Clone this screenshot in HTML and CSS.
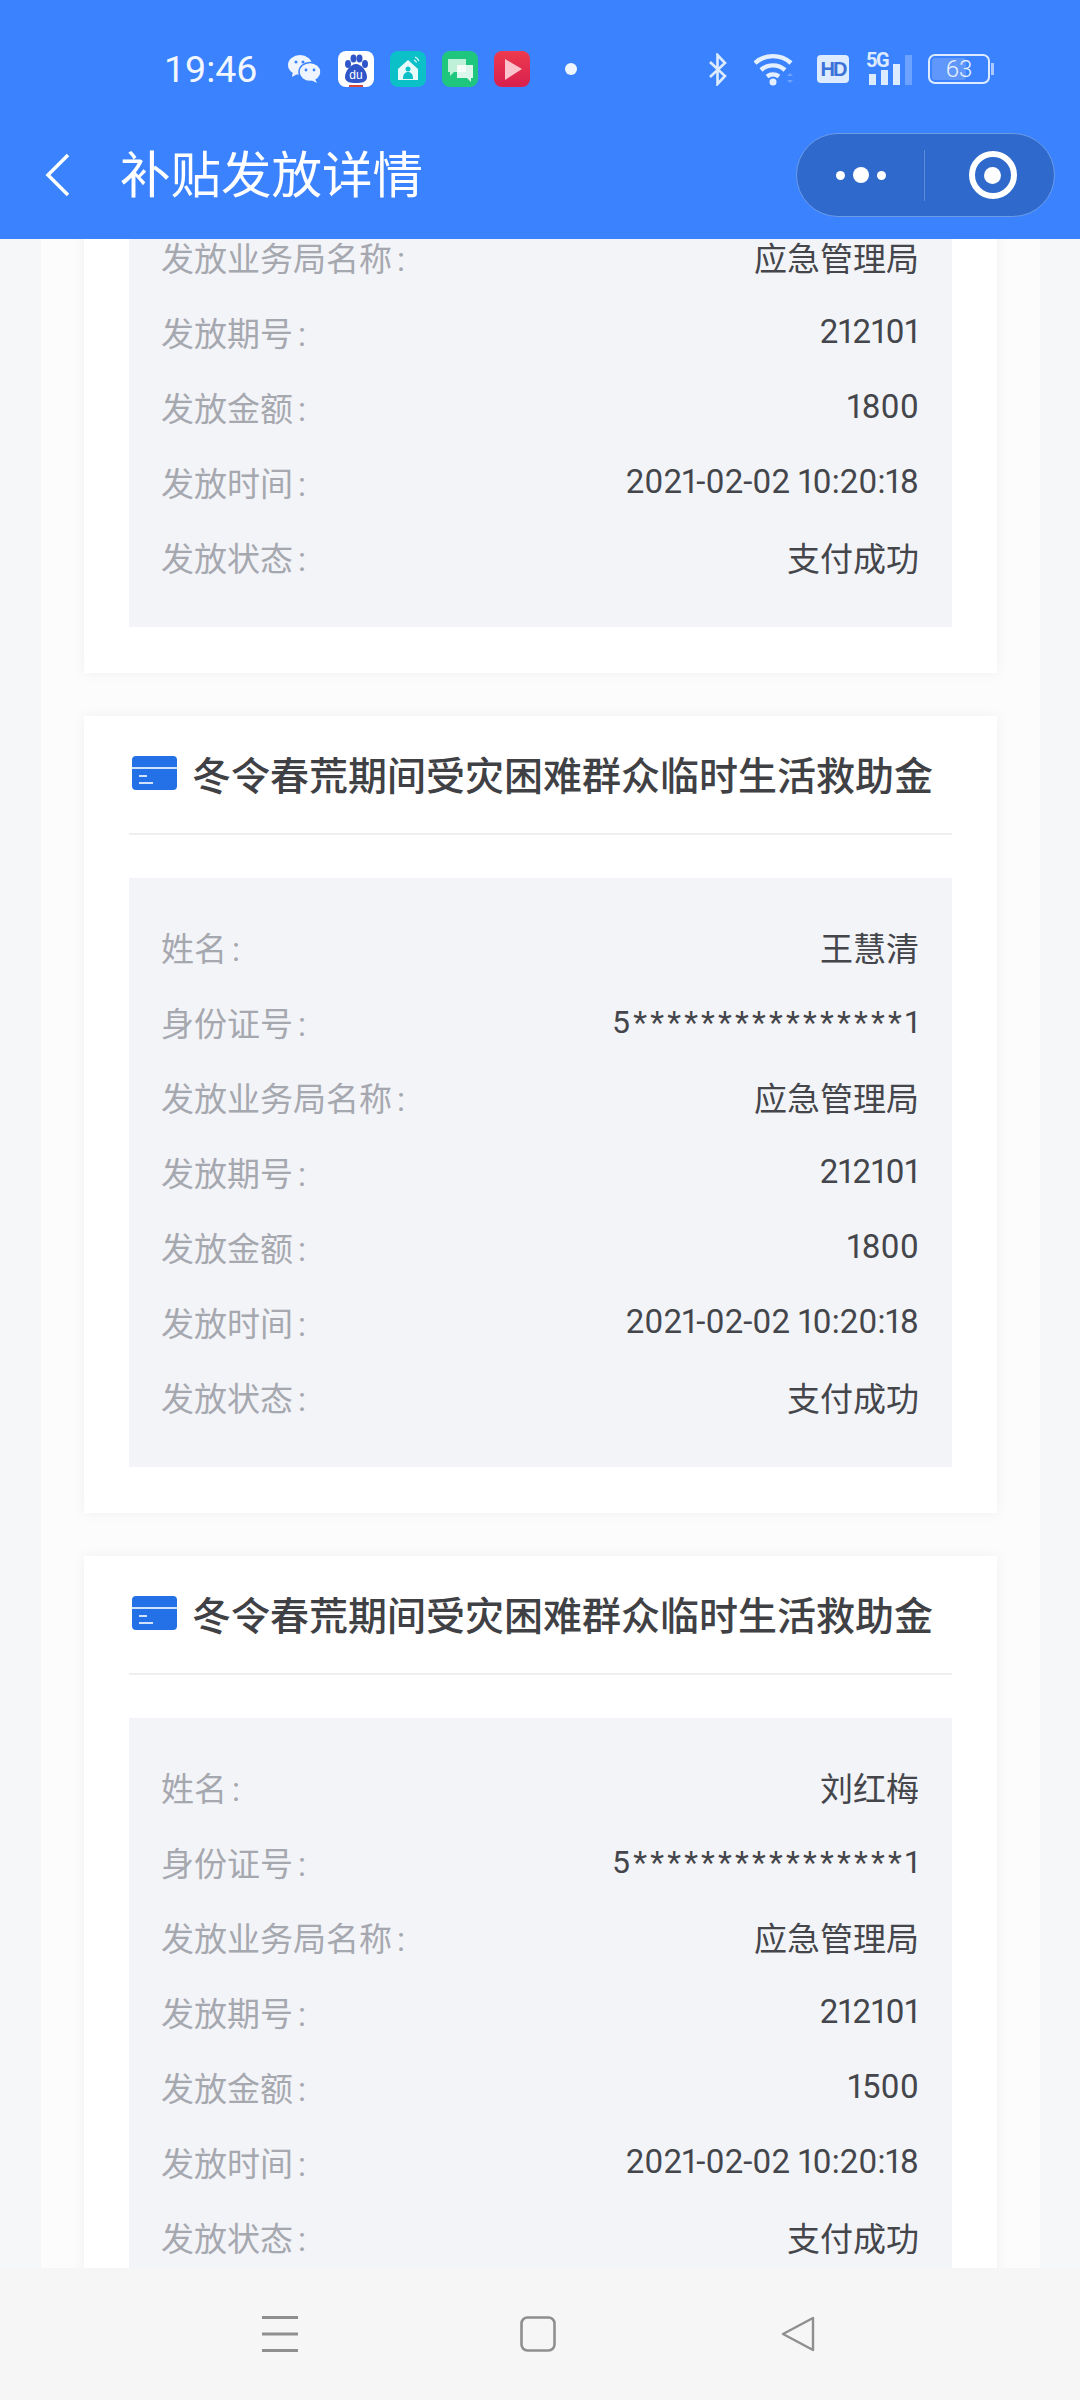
FILE: index.html
```html
<!DOCTYPE html>
<html lang="zh-CN">
<head>
    <meta charset="UTF-8">
    <meta name="viewport" content="width=device-width, initial-scale=1.0">
    <title>补贴发放详情</title>
    <link rel="stylesheet" href="styles.css">
</head>
<body>
    <div class="page">
        <header class="header">
            <div class="status">
                <span class="time">19:46</span>
                <svg class="ic-wechat" viewBox="0 0 33 28"><ellipse cx="12" cy="10" rx="12" ry="10" fill="#eef5ff"/><path d="M5 16l-1 6 7-4z" fill="#eef5ff"/><ellipse cx="22" cy="17" rx="11" ry="9.5" fill="#eef5ff" stroke="#3b82ff" stroke-width="1.5"/><path d="M27 24l2 4-6-3z" fill="#eef5ff"/><circle cx="8" cy="7" r="1.5" fill="#3b82ff"/><circle cx="15" cy="7" r="1.5" fill="#3b82ff"/><circle cx="18" cy="15" r="1.4" fill="#3b82ff"/><circle cx="26" cy="15" r="1.4" fill="#3b82ff"/></svg>
                <svg class="ic-app" viewBox="0 0 36 36"><rect width="36" height="36" rx="8" fill="#fff"/><ellipse cx="10" cy="13" rx="3" ry="4" fill="#2f55c8"/><ellipse cx="15.500" cy="7.500" rx="3" ry="4" fill="#2f55c8"/><ellipse cx="21.500" cy="7.500" rx="3" ry="4" fill="#2f55c8"/><ellipse cx="27" cy="13" rx="3" ry="4" fill="#2f55c8"/><path d="M18 13c5 0 11 7 11 13 0 5-5 6-11 6s-11-1-11-6c0-6 6-13 11-13z" fill="#2f55c8"/><text x="18" y="28" text-anchor="middle" class="du">du</text><rect x="11" y="34" width="14" height="2" fill="#d9453c"/></svg>
                <svg class="ic-app" viewBox="0 0 36 36"><rect width="36" height="36" rx="8" fill="#0cc0c8"/><path d="M8 18L18 9l10 9v11H8z" fill="#e8fbfb"/><circle cx="18" cy="18" r="2.500" fill="#0cc0c8"/><path d="M13 28c0-5 2-7 5-7s5 2 5 7z" fill="#0cc0c8"/><path d="M25 6c2 1 3 2 4 4M24 9c1 .5 2 1 2.500 2.500" fill="none" stroke="#e8fbfb" stroke-width="1.200"/></svg>
                <svg class="ic-app" viewBox="0 0 36 36"><rect width="36" height="36" rx="8" fill="#1fc77e"/><path d="M6 8h18v13H12l-4 4v-4H6z" fill="#bff0d8"/><path d="M15 14h16v13h-2v4l-4-4H15z" fill="#fff" opacity=".85"/></svg>
                <svg class="ic-app" viewBox="0 0 36 36"><defs><linearGradient id="redBg" x1="0" y1="0" x2="0" y2="1"><stop offset="0" stop-color="#ee3a4e"/><stop offset="1" stop-color="#d81f4e"/></linearGradient></defs><rect width="36" height="36" rx="8" fill="url(#redBg)"/><path d="M11 8l17 10-17 11z" fill="#fbc3cb"/></svg>
                <span class="dot"></span>

                <div class="status-right">
                    <svg class="ic-bt" viewBox="0 0 20 33"><path d="M2 9l15 14-7.500 8V2L17 10 2 24" fill="none" stroke="#dcebff" stroke-width="2.600"/></svg>
                    <svg class="ic-wifi" viewBox="0 0 41 34"><path d="M1 11a27 27 0 0 1 36 0M7 18a18 18 0 0 1 24 0M13 24.500a10 10 0 0 1 12 0" fill="none" stroke="#e4efff" stroke-width="4.400"/><circle cx="19" cy="30" r="3.500" fill="#e4efff"/><path d="M33 24l3-3 3 3zM33 28l3 3 3-3z" fill="#6ea2ff"/></svg>
                    <span class="hd">HD</span>
                    <div class="signal">
                        <span class="five-g">5G</span>
                        <span class="bar bar1"></span>
                        <span class="bar bar2"></span>
                        <span class="bar bar3"></span>
                        <span class="bar bar4"></span>
                    </div>
                    <div class="battery">
                        <span class="battery-level"></span>
                        <span class="battery-num">63</span>
                    </div>
                </div>
            </div>
            <div class="titlebar">
                <svg class="back" viewBox="0 0 25 44"><path d="M23 2L3 22l20 20" fill="none" stroke="#fff" stroke-width="3.500"/></svg>
                <h1>补贴发放详情</h1>
                <div class="capsule">
                    <div class="capsule-more">
                        <span class="cdot"></span>
                        <span class="cdot cdot-big"></span>
                        <span class="cdot"></span>
                    </div>
                    <div class="capsule-close"><span class="target"></span></div>
                </div>
            </div>
        </header>

        <main class="content">
            <div class="column">
                <section class="card card-cut">
                    <div class="panel">
                        <div class="row"><span class="label">发放业务局名称<span class="colon">:</span></span><span class="value">应急管理局</span></div>
                        <div class="row"><span class="label">发放期号<span class="colon">:</span></span><span class="value">212101</span></div>
                        <div class="row"><span class="label">发放金额<span class="colon">:</span></span><span class="value">1800</span></div>
                        <div class="row"><span class="label">发放时间<span class="colon">:</span></span><span class="value">2021-02-02 10:20:18</span></div>
                        <div class="row"><span class="label">发放状态<span class="colon">:</span></span><span class="value">支付成功</span></div>
                    </div>
                </section>

                <section class="card">
                    <div class="card-title">
                        <svg class="ic-card" viewBox="0 0 45 34"><rect width="45" height="34" rx="4" fill="#2470e6"/><rect y="11" width="45" height="2" fill="#cfe2ff"/><rect x="7" y="19" width="8" height="2" fill="#cfe2ff"/><rect x="7" y="26" width="14" height="2" fill="#cfe2ff"/></svg>
                        <h2>冬令春荒期间受灾困难群众临时生活救助金</h2>
                    </div>
                    <div class="panel">
                        <div class="row"><span class="label">姓名<span class="colon">:</span></span><span class="value">王慧清</span></div>
                        <div class="row"><span class="label">身份证号<span class="colon">:</span></span><span class="value value-id">5****************1</span></div>
                        <div class="row"><span class="label">发放业务局名称<span class="colon">:</span></span><span class="value">应急管理局</span></div>
                        <div class="row"><span class="label">发放期号<span class="colon">:</span></span><span class="value">212101</span></div>
                        <div class="row"><span class="label">发放金额<span class="colon">:</span></span><span class="value">1800</span></div>
                        <div class="row"><span class="label">发放时间<span class="colon">:</span></span><span class="value">2021-02-02 10:20:18</span></div>
                        <div class="row"><span class="label">发放状态<span class="colon">:</span></span><span class="value">支付成功</span></div>
                    </div>
                </section>

                <section class="card">
                    <div class="card-title">
                        <svg class="ic-card" viewBox="0 0 45 34"><rect width="45" height="34" rx="4" fill="#2470e6"/><rect y="11" width="45" height="2" fill="#cfe2ff"/><rect x="7" y="19" width="8" height="2" fill="#cfe2ff"/><rect x="7" y="26" width="14" height="2" fill="#cfe2ff"/></svg>
                        <h2>冬令春荒期间受灾困难群众临时生活救助金</h2>
                    </div>
                    <div class="panel">
                        <div class="row"><span class="label">姓名<span class="colon">:</span></span><span class="value">刘红梅</span></div>
                        <div class="row"><span class="label">身份证号<span class="colon">:</span></span><span class="value value-id">5****************1</span></div>
                        <div class="row"><span class="label">发放业务局名称<span class="colon">:</span></span><span class="value">应急管理局</span></div>
                        <div class="row"><span class="label">发放期号<span class="colon">:</span></span><span class="value">212101</span></div>
                        <div class="row"><span class="label">发放金额<span class="colon">:</span></span><span class="value">1500</span></div>
                        <div class="row"><span class="label">发放时间<span class="colon">:</span></span><span class="value">2021-02-02 10:20:18</span></div>
                        <div class="row"><span class="label">发放状态<span class="colon">:</span></span><span class="value">支付成功</span></div>
                    </div>
                </section>
            </div>
        </main>

        <nav class="sysnav">
            <svg class="nav-menu" viewBox="0 0 36 36"><path d="M0 1.500h36M0 18h36M0 34.500h36" stroke="#8f8f8f" stroke-width="3"/></svg>
            <svg class="nav-home" viewBox="0 0 36 36"><rect x="1.500" y="1.500" width="33" height="33" rx="6" fill="none" stroke="#8f8f8f" stroke-width="2.600"/></svg>
            <svg class="nav-back" viewBox="0 0 34 36"><path d="M32 2v32L2 18z" fill="none" stroke="#8f8f8f" stroke-width="2.400" stroke-linejoin="round"/></svg>
        </nav>
    </div>
</body>
</html>
```

FILE: styles.css
```css
* {
    box-sizing: border-box;
}

body {
    margin: 0;
    font-family: Roboto, "Noto Sans CJK SC", sans-serif;
    background-color: #f6f7f8;
}

.page {
    width: 1080px;
    height: 2400px;
    display: flex;
    flex-direction: column;
    overflow: hidden;
}

/* top blue area */
.header {
    height: 239px;
    flex-shrink: 0;
    background-color: #3b82ff;
    color: #fff;
    position: relative;
    z-index: 2;
}

.status {
    height: 138px;
    display: flex;
    align-items: center;
    padding-left: 164px;
    padding-right: 85px;
}

.time {
    font-size: 37.5px;
    color: #f2f7ff;
    width: 92px;
    white-space: nowrap;
}

.ic-wechat {
    width: 33px;
    height: 28px;
    margin-left: 32px;
    margin-right: 1px;
}

.ic-app {
    width: 36px;
    height: 36px;
    margin-left: 16px;
}

.du {
    font-family: "Liberation Sans", sans-serif;
    font-size: 12px;
    fill: #fff;
}

.dot {
    width: 12px;
    height: 12px;
    border-radius: 50%;
    background-color: #eef5ff;
    margin-left: 35px;
}

.status-right {
    margin-left: auto;
    display: flex;
    align-items: center;
}

.ic-bt {
    width: 20px;
    height: 33px;
}

.ic-wifi {
    width: 41px;
    height: 34px;
    margin-left: 26px;
}

.hd {
    width: 32px;
    height: 28px;
    margin-left: 22px;
    border-radius: 4px;
    background-color: #dcebff;
    color: #3b72d8;
    font-family: "Liberation Sans", sans-serif;
    font-size: 20px;
    font-weight: bold;
    letter-spacing: -2px;
    line-height: 28px;
    text-align: center;
}

.signal {
    width: 46px;
    height: 32px;
    margin-left: 17px;
    position: relative;
    display: flex;
    align-items: flex-end;
    gap: 5px;
    padding-left: 3px;
}

.five-g {
    position: absolute;
    left: 0;
    top: -5px;
    font-size: 20px;
    font-weight: bold;
    letter-spacing: -1.5px;
    color: #dcebff;
}

.bar {
    width: 7px;
    background-color: #dcebff;
}

.bar1 {
    height: 11px;
}

.bar2 {
    height: 15px;
}

.bar3 {
    height: 21px;
}

.bar4 {
    height: 30px;
    background-color: #6ea2ff;
}

.battery {
    width: 62px;
    height: 30px;
    margin-left: 16px;
    margin-right: 5px;
    border: 2px solid #dcebff;
    border-radius: 7px;
    position: relative;
    display: flex;
    align-items: center;
    justify-content: center;
}

.battery::after {
    content: "";
    position: absolute;
    right: -6px;
    top: 7px;
    width: 3px;
    height: 12px;
    background-color: #a9c9ff;
}

.battery-level {
    position: absolute;
    left: 2px;
    top: 2px;
    bottom: 2px;
    width: 34px;
    border-radius: 3px;
    background-color: #6097fb;
}

.battery-num {
    position: relative;
    font-size: 24px;
    font-weight: 300;
    color: #eaf2ff;
}

.titlebar {
    height: 74px;
    display: flex;
    align-items: center;
    padding-left: 45px;
}

.back {
    width: 25px;
    height: 44px;
}

h1 {
    margin: 0 0 0 50px;
    padding-top: 2px;
    font-size: 50.5px;
    font-weight: 400;
    line-height: 74px;
    white-space: nowrap;
}

.capsule {
    width: 259px;
    height: 84px;
    margin-left: auto;
    margin-right: 25px;
    border: 1px solid #6b9be8;
    border-radius: 42px;
    background-color: #2f69cb;
    display: flex;
    align-items: center;
}

.capsule-more {
    width: 128px;
    height: 51px;
    border-right: 1px solid #5c8bda;
    display: flex;
    align-items: center;
    justify-content: center;
    gap: 8px;
}

.cdot {
    width: 9px;
    height: 9px;
    border-radius: 50%;
    background-color: #fff;
}

.cdot-big {
    width: 16px;
    height: 16px;
}

.capsule-close {
    flex: 1;
    display: flex;
    justify-content: center;
    padding-left: 6px;
}

.target {
    width: 48px;
    height: 48px;
    border: 6px solid #fff;
    border-radius: 50%;
    display: flex;
    align-items: center;
    justify-content: center;
}

.target::before {
    content: "";
    width: 17px;
    height: 17px;
    border-radius: 50%;
    background-color: #fff;
}

/* scrolled list */
.content {
    flex: 1;
    overflow: hidden;
    background-color: #f6f7f8;
}

.column {
    width: 999px;
    margin-left: 41px;
    padding: 0 43px;
    background-color: #fcfcfd;
}

.card {
    width: 913px;
    margin-bottom: 43px;
    padding: 0 45px 46px;
    background-color: #fff;
    box-shadow: 0 0 14px rgba(0, 0, 0, 0.05);
}

.card-cut {
    margin-top: -20px;
}

.card-title {
    height: 119px;
    margin-bottom: 43px;
    border-bottom: 2px solid #eeeff1;
    display: flex;
    align-items: center;
    padding-left: 3px;
    padding-bottom: 3px;
}

.ic-card {
    width: 45px;
    height: 34px;
    flex-shrink: 0;
}

h2 {
    margin: 0 0 0 15px;
    font-size: 39px;
    font-weight: 500;
    color: #3f4145;
    white-space: nowrap;
}

.panel {
    padding: 31px 33px 33px 32px;
    background-color: #f3f4f8;
}

.card-cut .panel {
    padding-top: 0;
}

.row {
    height: 75px;
    display: flex;
    align-items: center;
    justify-content: space-between;
    font-size: 33px;
    font-variant-numeric: proportional-nums;
}

.label {
    color: #a6a8af;
}

.colon {
    margin-left: 5px;
}

.value {
    color: #44464b;
}

.value-id {
    font-size: 32px;
    letter-spacing: 3.2px;
    margin-right: -3px;
}

/* android nav */
.sysnav {
    height: 132px;
    flex-shrink: 0;
    background-color: #f6f6f6;
    display: flex;
    align-items: center;
    padding-left: 262px;
    position: relative;
    z-index: 2;
}

.nav-menu,
.nav-home {
    width: 36px;
    height: 36px;
}

.nav-home {
    margin-left: 222px;
}

.nav-back {
    width: 34px;
    height: 36px;
    margin-left: 225px;
}
```
